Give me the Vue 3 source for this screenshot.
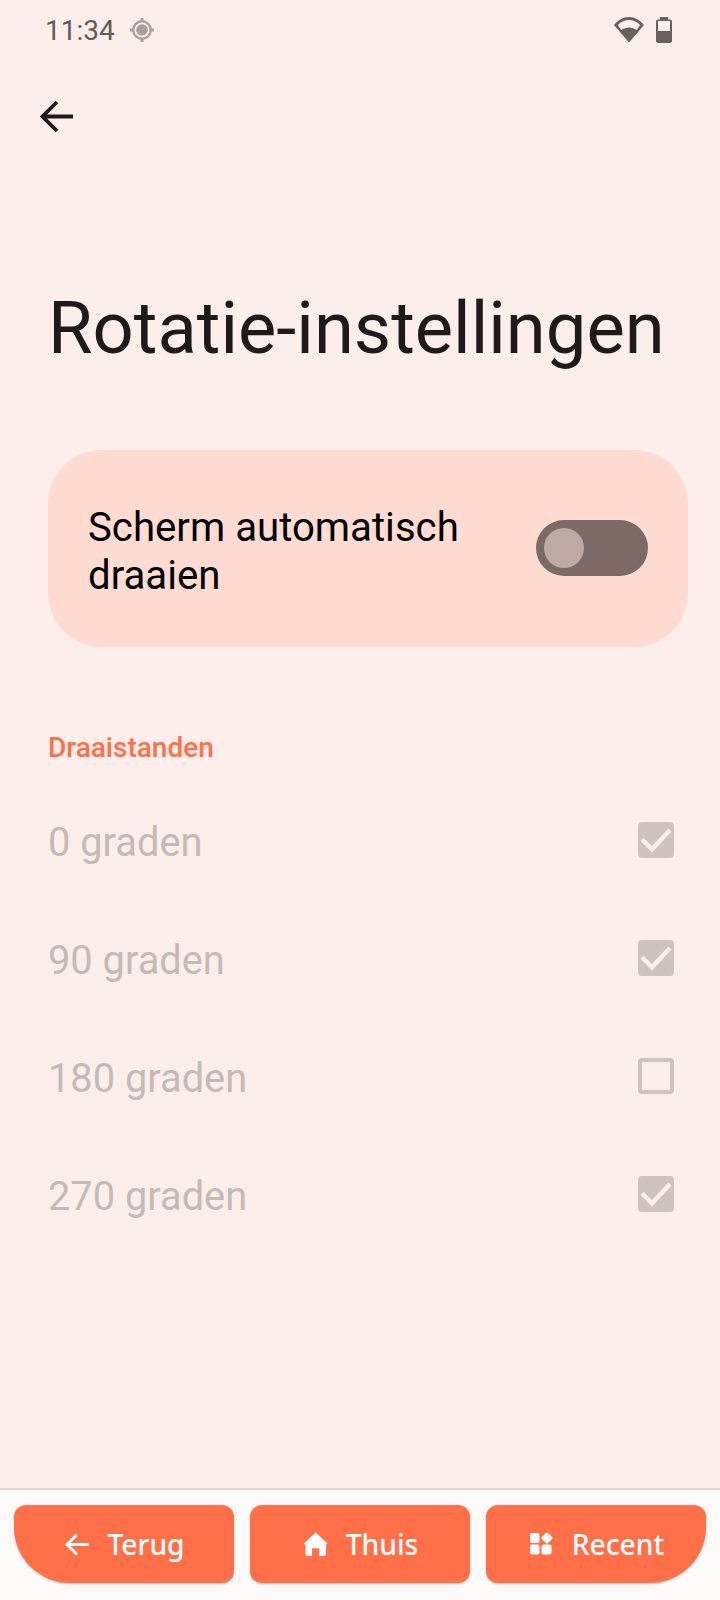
<template>
  <div class="screen">
    <div class="status-bar">
      <div class="status-left">
        <span class="time">11:34</span>
        <svg class="gps" width="24" height="24" viewBox="0 0 24 24">
          <path d="M12 0v4M12 20v4M0 12h4M20 12h4" stroke="#aaa09e" stroke-width="3" fill="none" />
          <circle cx="12" cy="12" r="8.800" fill="none" stroke="#aaa09e" stroke-width="2.400" />
          <circle cx="12" cy="12" r="5.800" fill="#aaa09e" />
        </svg>
      </div>
      <div class="status-right">
        <svg width="30" height="26" viewBox="0 0 30 26">
          <path fill-rule="evenodd" d="M15 25.500 0 8C4 3 9.500 0 15 0S26 3 30 8ZM3.800 8 7.200 13C9.500 11.200 12.300 10.400 15 10.400S20.500 11.200 22.800 13L26.200 8C23 4.800 19 3 15 3S7 4.800 3.800 8Z" fill="#6a605e" />
        </svg>
        <svg width="16" height="26" viewBox="0 0 16 26">
          <path d="M4 0h8v2.500h2c1 0 2 .8 2 2V24c0 1.200-1 2-2 2H2c-1 0-2-.8-2-2V4.500c0-1.200 1-2 2-2h2Z" fill="#6a605e" />
          <rect x="2" y="4" width="12" height="10" fill="#fceeeb" />
        </svg>
      </div>
    </div>

    <div class="toolbar">
      <svg width="33" height="33" viewBox="0 0 33 33">
        <path d="M33 16.500H3M17 2 2.500 16.500 17 31" fill="none" stroke="#1f1a19" stroke-width="3.800" />
      </svg>
    </div>

    <h1 class="title">Rotatie-instellingen</h1>

    <div class="card">
      <span class="card-label">Scherm automatisch draaien</span>
      <div class="switch">
        <div class="thumb"></div>
      </div>
    </div>

    <div class="section-title">Draaistanden</div>

    <div class="rows">
      <div v-for="row in rows" :key="row.label" class="row">
        <span class="row-label">{{ row.label }}</span>
        <div class="checkbox" :class="{ checked: row.checked }">
          <svg v-if="row.checked" width="36" height="36" viewBox="0 0 36 36">
            <path d="M4 17.300 14 27.300 32 8" fill="none" stroke="#fceeeb" stroke-width="4.400" />
          </svg>
        </div>
      </div>
    </div>

    <div class="spacer"></div>

    <div class="nav">
      <div class="nav-btn left">
        <svg width="24" height="21" viewBox="0 0 24 21">
          <path d="M22.500 10.500H2.500M11 1.500 2 10.500l9 9" fill="none" stroke="#fff" stroke-width="3" stroke-linecap="round" stroke-linejoin="round" />
        </svg>
        <span>Terug</span>
      </div>
      <div class="nav-btn">
        <svg width="24" height="24" viewBox="0 0 24 24">
          <path d="M11.700.5 23 11c.6.600.2 1.500-.6 1.500H22V22c0 1.100-.9 2-2 2h-4.700v-7.700H8V24H3.500c-1.100 0-2-.9-2-2V12.500H1C.2 12.500-.2 11.600.4 11Z" fill="#fff" />
        </svg>
        <span>Thuis</span>
      </div>
      <div class="nav-btn right">
        <svg width="24" height="24" viewBox="0 0 24 24">
          <rect x="0" y="1" width="9.500" height="10" rx="2" fill="#fff" />
          <rect x="0" y="12.500" width="9.500" height="10" rx="2" fill="#fff" />
          <rect x="11.500" y="12.500" width="10" height="10" rx="2" fill="#fff" />
          <rect x="12.700" y="1.700" width="8.600" height="8.600" rx="1.500" fill="#fff" transform="rotate(45 17 6)" />
        </svg>
        <span>Recent</span>
      </div>
    </div>
  </div>
</template>

<script setup>
const rows = [
  { label: '0 graden', checked: true },
  { label: '90 graden', checked: true },
  { label: '180 graden', checked: false },
  { label: '270 graden', checked: true }
]
</script>

<style>
html, body {
  margin: 0;
  background: #fceeeb;
}
</style>

<style scoped>
.screen {
  width: 720px;
  height: 1600px;
  display: flex;
  flex-direction: column;
  background: #fceeeb;
  font-family: Roboto, "Noto Sans", sans-serif;
  overflow: hidden;
}

.status-bar {
  height: 60px;
  padding: 0 48px 0 45px;
  display: flex;
  align-items: center;
  justify-content: space-between;
}

.status-left,
.status-right {
  display: flex;
  align-items: center;
}

.status-left {
  gap: 15px;
}

.status-right {
  gap: 12px;
}

.time {
  font-size: 28px;
  color: #625b59;
}

.toolbar {
  height: 112px;
  padding-left: 40px;
  display: flex;
  align-items: center;
}

.title {
  margin: 113px 0 0 48px;
  font-size: 72.300px;
  line-height: 88px;
  font-weight: 400;
  color: #1f1a19;
  white-space: nowrap;
}

.card {
  margin: 77px 32px 0 48px;
  height: 197px;
  padding: 0 40px;
  border-radius: 54px;
  background: #ffdbd1;
  display: flex;
  align-items: center;
  justify-content: space-between;
}

.card-label {
  width: 400px;
  padding-top: 6px;
  font-size: 40.200px;
  line-height: 48px;
  color: #000;
}

.switch {
  width: 112px;
  height: 56px;
  margin-top: -2px;
  border-radius: 28px;
  background: #7b6a66;
  display: flex;
  align-items: center;
  padding-left: 8px;
  box-sizing: border-box;
}

.thumb {
  width: 40px;
  height: 40px;
  border-radius: 50%;
  background: #bdaaa5;
}

.section-title {
  margin: 85px 0 0 48px;
  font-size: 28px;
  line-height: 32px;
  font-weight: 500;
  color: #ff7049;
}

.rows {
  margin-top: 20px;
  padding: 0 46px 0 48px;
}

.row {
  height: 118px;
  display: flex;
  align-items: center;
  justify-content: space-between;
}

.row-label {
  padding-bottom: 2px;
  font-size: 39.800px;
  color: #c6bab7;
}

.checkbox {
  width: 36px;
  height: 36px;
  box-sizing: border-box;
  border: 4px solid #cfc3c0;
  border-radius: 4px;
  position: relative;
  top: -3px;
}

.checkbox.checked {
  border: none;
  background: #cfc3c0;
}

.checkbox svg {
  display: block;
}

.spacer {
  flex: 1;
}

.nav {
  height: 112px;
  box-sizing: border-box;
  border-top: 2px solid #e2d5d2;
  background: #fdfafa;
  padding: 15px 14px 0;
  display: flex;
  gap: 16px;
}

.nav-btn {
  flex: 1 1 0;
  box-sizing: border-box;
  height: 78px;
  padding-left: 2px;
  border-radius: 12px;
  background: #ff7049;
  box-shadow: 0 1px 2px rgba(0, 0, 0, 0.25);
  color: #fff;
  font-family: "Noto Sans", sans-serif;
  font-size: 28.200px;
  font-weight: 500;
  display: flex;
  align-items: center;
  justify-content: center;
  gap: 18px;
}

.nav-btn.left {
  border-bottom-left-radius: 56px;
}

.nav-btn.right {
  border-bottom-right-radius: 56px;
}
</style>
